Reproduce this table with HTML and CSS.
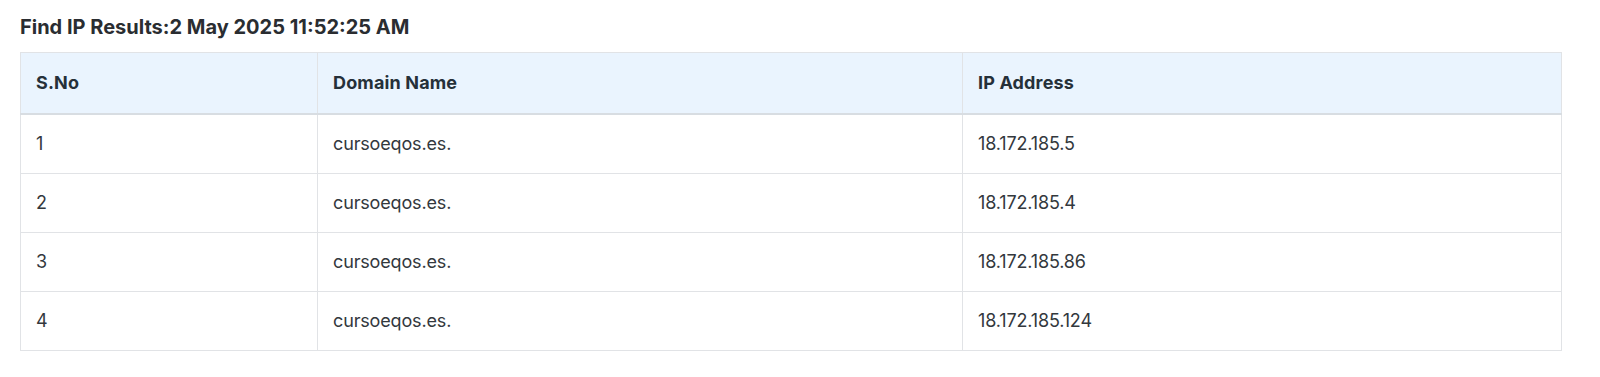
FILE: index.html
```html
<!DOCTYPE html>
<html lang="en">
<head>
<meta charset="utf-8">
<title>Find IP Results</title>
<link rel="stylesheet" href="styles.css">
</head>
<body>
<div class="page">
  <h2 class="title">Find IP Results:2 May 2025 11:52:25 AM</h2>
  <table class="results">
    <colgroup>
      <col class="c-sno">
      <col class="c-domain">
      <col class="c-ip">
    </colgroup>
    <thead>
      <tr><th>S.No</th><th>Domain Name</th><th>IP Address</th></tr>
    </thead>
    <tbody>
      <tr><td>1</td><td>cursoeqos.es.</td><td>18.172.185.5</td></tr>
      <tr><td>2</td><td>cursoeqos.es.</td><td>18.172.185.4</td></tr>
      <tr><td>3</td><td>cursoeqos.es.</td><td>18.172.185.86</td></tr>
      <tr><td>4</td><td>cursoeqos.es.</td><td>18.172.185.124</td></tr>
    </tbody>
  </table>
</div>
</body>
</html>
```
FILE: styles.css
```css
html, body {
  margin: 0;
  padding: 0;
  background: #ffffff;
}
body {
  font-family: Inter, "Noto Sans", "Liberation Sans", sans-serif;
  color: #2c3238;
}
.page {
  padding: 13px 38px 0 20px;
}
.title {
  margin: 0 0 11px 0;
  font-size: 20px;
  line-height: 28px;
  font-weight: 650;
  color: #2a2d31;
  letter-spacing: 0;
}
.results {
  width: 100%;
  border-collapse: collapse;
  table-layout: fixed;
  border: 1px solid #dfe2e5;
}
.c-sno { width: 297px; }
.c-domain { width: 645px; }
.c-ip { width: auto; }
.results th,
.results td {
  text-align: left;
  padding: 16px 15px;
  font-size: 18px;
  line-height: 26px;
  border: 1px solid #e1e3e6;
}
.results thead th {
  background: #eaf4fe;
  font-weight: 680;
  color: #253039;
  border-bottom: 2px solid #d8dde2;
  letter-spacing: 0.15px;
  padding-top: 17px;
  padding-bottom: 17px;
}
.results td {
  font-weight: 400;
  color: #33383d;
  letter-spacing: -0.15px;
}
```
